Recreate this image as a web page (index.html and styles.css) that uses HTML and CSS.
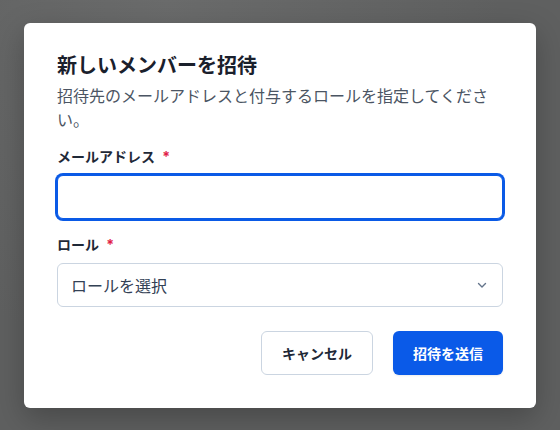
FILE: index.html
```html
<!DOCTYPE html>
<html lang="ja">
<head>
  <meta charset="UTF-8">
  <title>メンバー招待</title>
  <link rel="stylesheet" href="styles.css">
</head>
<body>
  <!-- Blurred page behind the modal -->
  <div class="backdrop">
    <div class="dialog" role="dialog" aria-labelledby="inviteTitle">
      <h2 id="inviteTitle" class="dialog-title">新しいメンバーを招待</h2>
      <p class="dialog-desc">招待先のメールアドレスと付与するロールを指定してください。</p>

      <div class="field">
        <label class="field-label" for="email">メールアドレス <span class="req">*</span></label>
        <input id="email" type="email" class="text-input is-focused">
      </div>

      <div class="field">
        <label class="field-label">ロール <span class="req">*</span></label>
        <div class="select-box">
          <span class="select-text">ロールを選択</span>
          <svg class="chevron" width="12" height="12" viewBox="0 0 12 12" fill="none">
            <path d="M2.5 4.5 L6 8 L9.5 4.5" stroke="#64748b" stroke-width="1.4" stroke-linecap="round" stroke-linejoin="round"/>
          </svg>
        </div>
      </div>

      <div class="dialog-actions">
        <button class="btn btn-outline">キャンセル</button>
        <button class="btn btn-primary">招待を送信</button>
      </div>
    </div>
  </div>
</body>
</html>
```

FILE: styles.css
```css
body {
  margin: 0;
  font-family: Inter, "Noto Sans CJK JP", sans-serif;
  color: #1e293b;
}

/* Dimmed overlay */
.backdrop {
  min-height: 430px;
  background: radial-gradient(ellipse at 30% 0%, #6a6b6b, #5f6060 60%);
  display: flex;
  justify-content: center;
  align-items: flex-start;
  padding-top: 23px;
  box-sizing: border-box;
}

.dialog {
  width: 512px;
  box-sizing: border-box;
  background: #fff;
  border-radius: 6px;
  padding: 29px 33px 33px;
  box-shadow: 0 10px 30px rgba(0, 0, 0, 0.25);
}

.dialog-title {
  margin: 0;
  font-size: 20px;
  line-height: 28px;
  font-weight: 700;
  color: #1a202c;
}

.dialog-desc {
  margin: 4px 0 0;
  font-size: 16px;
  line-height: 24px;
  color: #4b5563;
}

.field {
  margin-top: 15px;
}
.field + .field {
  margin-top: 16px;
}

.field-label {
  display: block;
  font-size: 14px;
  line-height: 20px;
  font-weight: 700;
  color: #1f2937;
  margin-bottom: 8px;
}
.req {
  color: #e11d48;
  margin-left: 4px;
}

.text-input {
  display: block;
  width: 100%;
  height: 44px;
  box-sizing: border-box;
  border: 1px solid #cbd5e1;
  border-radius: 6px;
  padding: 0 12px;
  font: inherit;
  font-size: 16px;
  outline: none;
}
.text-input.is-focused {
  border-color: #0a5ae6;
  box-shadow: 0 0 0 2px #0a5ae6;
}

.select-box {
  display: flex;
  align-items: center;
  justify-content: space-between;
  height: 44px;
  box-sizing: border-box;
  border: 1px solid #cbd5e1;
  border-radius: 6px;
  padding: 0 14px 0 13px;
}
.select-text {
  font-size: 16px;
  color: #334155;
}

.dialog-actions {
  display: flex;
  justify-content: flex-end;
  gap: 20px;
  margin-top: 24px;
}

.btn {
  height: 44px;
  padding: 0 20px;
  border-radius: 6px;
  font: inherit;
  font-size: 14px;
  font-weight: 700;
  cursor: pointer;
}
.btn-outline {
  background: #fff;
  border: 1px solid #cbd5e1;
  color: #1f2937;
}
.btn-primary {
  background: #0a5ae8;
  border: none;
  color: #fff;
  font-weight: 600;
  box-shadow: 0 1px 2px rgba(0, 0, 0, 0.08);
}
```
